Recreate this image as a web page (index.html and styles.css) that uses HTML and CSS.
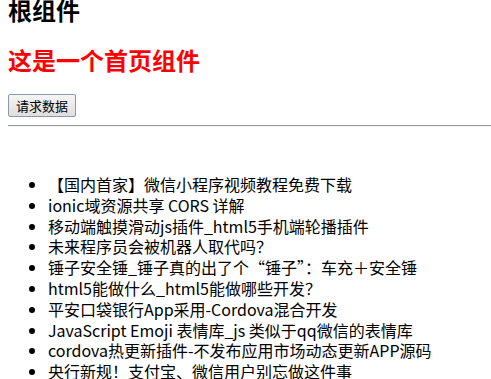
FILE: index.html
```html
<!DOCTYPE html>
<html lang="zh-CN">
<head>
<meta charset="utf-8">
<title>根组件</title>
<link rel="stylesheet" href="styles.css">
</head>
<body>
<div class="app">
  <h1 class="root-title">根组件</h1>
  <div class="home">
    <h2 class="home-title">这是一个首页组件</h2>
    <button class="fetch-btn" type="button">请求数据</button>
    <hr class="divider">
    <ul class="news-list">
      <li>【国内首家】微信小程序视频教程免费下载</li>
      <li>ionic域资源共享 CORS 详解</li>
      <li>移动端触摸滑动js插件_html5手机端轮播插件</li>
      <li>未来程序员会被机器人取代吗？</li>
      <li>锤子安全锤_锤子真的出了个“锤子”：车充＋安全锤</li>
      <li>html5能做什么_html5能做哪些开发？</li>
      <li>平安口袋银行App采用-Cordova混合开发</li>
      <li>JavaScript Emoji 表情库_js 类似于qq微信的表情库</li>
      <li>cordova热更新插件-不发布应用市场动态更新APP源码</li>
      <li>央行新规！支付宝、微信用户别忘做这件事</li>
    </ul>
  </div>
</div>
</body>
</html>
```

FILE: styles.css
```css
html, body {
  margin: 0;
  padding: 0;
  background: #ffffff;
}

body {
  padding-left: 8px;
  font-family: "Noto Sans CJK SC", "Open Sans", sans-serif;
  color: #000000;
  overflow: hidden;
}

.root-title {
  margin: -2px 0 0;
  font-size: 24px;
  line-height: 24px;
  font-weight: bold;
}

.home-title {
  margin: 26px 0 0;
  font-size: 24px;
  line-height: 24px;
  font-weight: bold;
  color: #ff0000;
}

.fetch-btn {
  display: block;
  margin-top: 22px;
  height: 23px;
  padding: 0 7px;
  font-family: "Noto Sans CJK SC", sans-serif;
  font-size: 13px;
  line-height: 19px;
  color: #000000;
  background: linear-gradient(#f6f6f6, #dedede);
  border: 1px solid #8e9aaa;
  border-radius: 2px;
}

.divider {
  margin: 8px 0 0;
  height: 0;
  border: 0;
  border-top: 1px solid #9a9a9a;
  border-bottom: 1px solid #eeeeee;
}

.news-list {
  margin: 47px 0 0;
  padding-left: 40px;
  font-size: 16px;
  line-height: 20.8px;
}
```
